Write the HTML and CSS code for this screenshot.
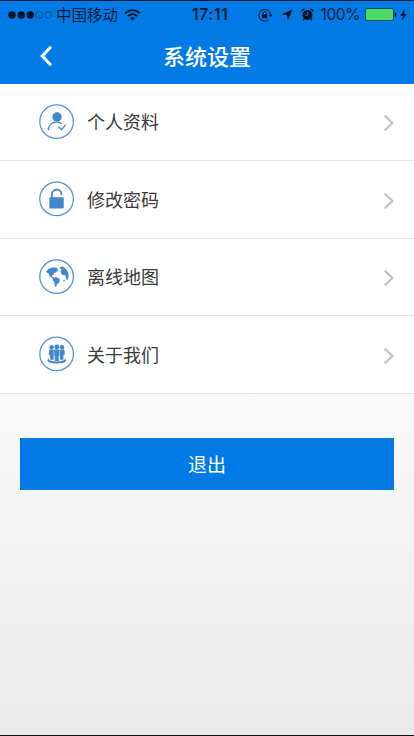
FILE: index.html
```html
<!DOCTYPE html>
<html lang="zh-CN">
<head>
<meta charset="utf-8">
<meta name="viewport" content="width=device-width, initial-scale=1">
<title>系统设置</title>
<link rel="stylesheet" href="styles.css">
</head>
<body>
<div class="screen">
  <header class="header">
    <div class="status">
      <div class="status-left">
        <svg class="signal" viewBox="0 0 44 10" width="44" height="10">
          <circle cx="4" cy="5" r="3.7"/><circle cx="13.2" cy="5" r="3.7"/><circle cx="22.3" cy="5" r="3.7"/>
          <g class="ring"><circle cx="31.2" cy="5" r="3.4"/><circle cx="40" cy="5" r="3.4"/></g>
        </svg>
        <span class="carrier">中国移动</span>
        <svg class="wifi" viewBox="0 0 17 12" width="17" height="12">
          <path class="wave" d="M1.1 4.3Q8.5-2 15.9 4.3M3.8 7.2Q8.5 3 13.2 7.2"/>
          <path d="M5.9 9.1Q8.5 6.9 11.1 9.1L8.5 11.7Z"/>
        </svg>
      </div>
      <span class="time">17:11</span>
      <div class="status-right">
        <svg viewBox="0 0 15 14" width="15" height="14">
          <path class="thin" d="M10.5 11.8A5.9 5.9 0 1 1 12.6 7"/>
          <path d="M10.6 6.7h4l-2 2.6zM4.1 6.2h5.2v4H4.1z"/>
          <path class="thin" d="M5.1 6.5V5a1.6 1.6 0 0 1 3.2 0v1.5"/>
        </svg>
        <svg class="location" viewBox="0 0 12 12" width="12" height="12"><path d="M11.5.5L6.8 11.4 6 6.1.6 5.3z"/></svg>
        <svg class="alarm" viewBox="0 0 13 13" width="13" height="13">
          <circle cx="6.5" cy="7" r="5.1"/>
          <path d="M.4 4.2A3 3 0 0 1 4.2.7zM12.6 4.2A3 3 0 0 0 8.8.7zM2.4 10.2l1.5 1.2-1.2 1.3-1-1zM10.6 10.2l-1.5 1.2 1.2 1.3 1-1z"/>
          <path class="hands" d="M6.7 4v3.2H4.2"/>
        </svg>
        <span class="percent">100%</span>
        <svg class="battery" viewBox="0 0 32 13" width="32" height="13">
          <rect class="cell" x=".5" y=".5" width="28" height="12" rx="1.6"/>
          <path d="M29.7 4.3q1.8 0 1.8 2.2t-1.8 2.2z"/>
        </svg>
        <svg class="bolt" viewBox="0 0 7 12" width="7" height="12"><path d="M4.8 0L.4 6.8h2.5L1.7 12l4.9-7H4z"/></svg>
      </div>
    </div>
    <nav class="navbar">
      <svg class="back" viewBox="0 0 14 22" width="14" height="22"><path d="M12 1.8L3.2 11l8.8 9.2"/></svg>
      <h1 class="title">系统设置</h1>
    </nav>
  </header>

  <ul class="menu">
    <li class="item">
      <svg class="icon" viewBox="0 0 36 36" width="36" height="36">
        <circle class="outline" cx="17.6" cy="17.6" r="16.8"/>
        <circle cx="18" cy="13" r="4.7"/>
        <path class="line" d="M9.3 26.2C9.4 21.4 12.7 18 18 18q2.5 0 4.7 1.7M19.3 22.5l3.2 3.2 4.4-5.1"/>
      </svg>
      <span class="label">个人资料</span>
      <svg class="chevron" viewBox="0 0 12 18" width="12" height="18"><path d="M1.7 1.6L9.4 9l-7.7 7.4"/></svg>
    </li>
    <li class="item">
      <svg class="icon" viewBox="0 0 36 36" width="36" height="36">
        <circle class="outline" cx="17.6" cy="17.9" r="16.8"/>
        <rect x="10.3" y="16.2" width="14.4" height="11.4" rx="1"/>
        <path class="shackle" d="M12.9 17v-3.7a4.8 4.8 0 0 1 9.6 0v.9"/>
      </svg>
      <span class="label">修改密码</span>
      <svg class="chevron" viewBox="0 0 12 18" width="12" height="18"><path d="M1.7 1.6L9.4 9l-7.7 7.4"/></svg>
    </li>
    <li class="item">
      <svg class="icon" viewBox="0 0 36 36" width="36" height="36">
        <circle class="outline" cx="17.6" cy="17.6" r="16.8"/>
        <path d="M7 13L9.3 9.9l3.8-1.3 4.8.1 1.3 2-1.9 2.5-2.2.7-.5 2-1.8.4.8 1.6 1.6.9-.7.8-3.7-2.1-1.2-2.9z"/>
        <path d="M13.8 18.9l3.7-.8 3.5 2.4-1 3.3-1.9 1.3-.9 2.9-1.4-.6-.4-4.4-1.8-1.9z"/>
        <path d="M20.3 8.2l3.6-.7 3.3 2.8 2.2 3.9.2 4-1.6 3.2-1.2-2.3-.2-2.6-2.4-.3-2-1.7-.6-2.3 1-1.4zM24.1 21.5l1-.8.8 1.1-1 1.1z"/>
      </svg>
      <span class="label">离线地图</span>
      <svg class="chevron" viewBox="0 0 12 18" width="12" height="18"><path d="M1.7 1.6L9.4 9l-7.7 7.4"/></svg>
    </li>
    <li class="item">
      <svg class="icon" viewBox="0 0 36 36" width="36" height="36">
        <circle class="outline" cx="17.6" cy="17.9" r="16.8"/>
        <circle cx="12.6" cy="11.2" r="2.3"/><circle cx="23" cy="11.2" r="2.3"/><circle cx="17.8" cy="11" r="2.4"/>
        <path d="M10.2 13.5h4.5v10.3h-3.5v-4.2l-1.4-.8zM25.4 13.5h-4.5v10.3h3.5v-4.2l1.4-.8zM15.2 13.5h5.2v5.8l-.6.7v5h-4v-5l-.6-.7z"/>
        <path d="M9.3 22.3l1 1.9q7.3 2.5 14.8 0l1-1.9 1.2 2.5-1.8 1.8q-7.6 2-15.4 0l-1.8-1.8z"/>
      </svg>
      <span class="label">关于我们</span>
      <svg class="chevron" viewBox="0 0 12 18" width="12" height="18"><path d="M1.7 1.6L9.4 9l-7.7 7.4"/></svg>
    </li>
  </ul>

  <main class="actions">
    <button class="logout" type="button">退出</button>
  </main>
</div>
</body>
</html>
```

FILE: styles.css
```css
* {
  box-sizing: border-box;
}

body {
  margin: 0;
  font-family: "Noto Sans CJK SC", sans-serif;
}

.screen {
  display: flex;
  flex-direction: column;
  height: 736px;
  overflow: hidden;
  border-top: 1px solid #001a3c;
  border-bottom: 1px solid #111;
  background: linear-gradient(#fafafa 380px, #eaeaea);
}

.header {
  flex: none;
  height: 82.5px;
  background: #007be6;
}

.status {
  display: grid;
  grid-template-columns: 184px auto 1fr;
  align-items: center;
  height: 27px;
  padding: 0 7px 0 8px;
  color: #001d38;
}

.status svg {
  display: block;
  flex: none;
  fill: #001426;
}

.status-left,
.status-right {
  display: flex;
  align-items: center;
  height: 26px;
}

.status-right {
  justify-content: flex-end;
}

.status .ring {
  fill: none;
  stroke: #003d78;
  stroke-width: .7;
}

.carrier {
  margin-left: 4px;
  font-size: 15.5px;
  line-height: 20px;
  padding-bottom: 1px;
}

.wifi {
  margin-left: 6px;
}

.status .wave {
  fill: none;
  stroke: #001426;
  stroke-width: 1.8;
}

.status .thin {
  fill: none;
  stroke: #001d38;
  stroke-width: 1;
}

.status .hands {
  fill: none;
  stroke: #007be6;
  stroke-width: 1;
}

.time {
  font: 600 15.5px/20px Inter, sans-serif;
  letter-spacing: .7px;
}

.location {
  margin-left: 8px;
}

.alarm {
  margin-left: 8px;
}

.percent {
  margin-left: 7px;
  padding-top: 1px;
  font: 400 15.5px/20px Inter, sans-serif;
  letter-spacing: -.4px;
}

.battery {
  margin-left: 5px;
}

.status .cell {
  fill: #4cd964;
  stroke: #064a6b;
}

.bolt {
  margin-left: 3px;
}

.navbar {
  display: grid;
  grid-template-columns: 40px 1fr 40px;
  align-items: center;
  height: 55px;
}

.back {
  justify-self: end;
  margin-right: -13px;
  fill: none;
  stroke: #fff;
  stroke-width: 3;
}

.title {
  margin: 0;
  color: #fff;
  font-size: 22px;
  font-weight: 500;
  line-height: 30px;
  padding-bottom: 1px;
  text-align: center;
}

.menu {
  flex: none;
  margin: 0;
  padding: 0;
  list-style: none;
  background: #fff;
}

.item {
  display: flex;
  align-items: center;
  height: 77.5px;
  padding: 0 19px 0 39px;
  border-bottom: 1px solid #e4e4e4;
}

.icon {
  flex: none;
  fill: #4087cb;
}

.outline {
  fill: none;
  stroke: #5594d2;
  stroke-width: 1.3;
}

.line {
  fill: none;
  stroke: #4c8fd0;
  stroke-width: 1.4;
}

.shackle {
  fill: none;
  stroke: #4087cb;
  stroke-width: 1.8;
}

.label {
  flex: 1;
  margin-left: 12px;
  padding-bottom: 1px;
  color: #3a3a3a;
  font-size: 18px;
  line-height: 26px;
}

.chevron {
  flex: none;
  margin-top: 3px;
  fill: none;
  stroke: #c4c4c4;
  stroke-width: 2.3;
}

.actions {
  padding: 44.5px 20px 0;
}

.logout {
  display: block;
  width: 100%;
  height: 52px;
  padding: 0;
  border: 0;
  background: #007be6;
  color: #fff;
  font: 400 19px/52px "Noto Sans CJK SC", sans-serif;
}
```
